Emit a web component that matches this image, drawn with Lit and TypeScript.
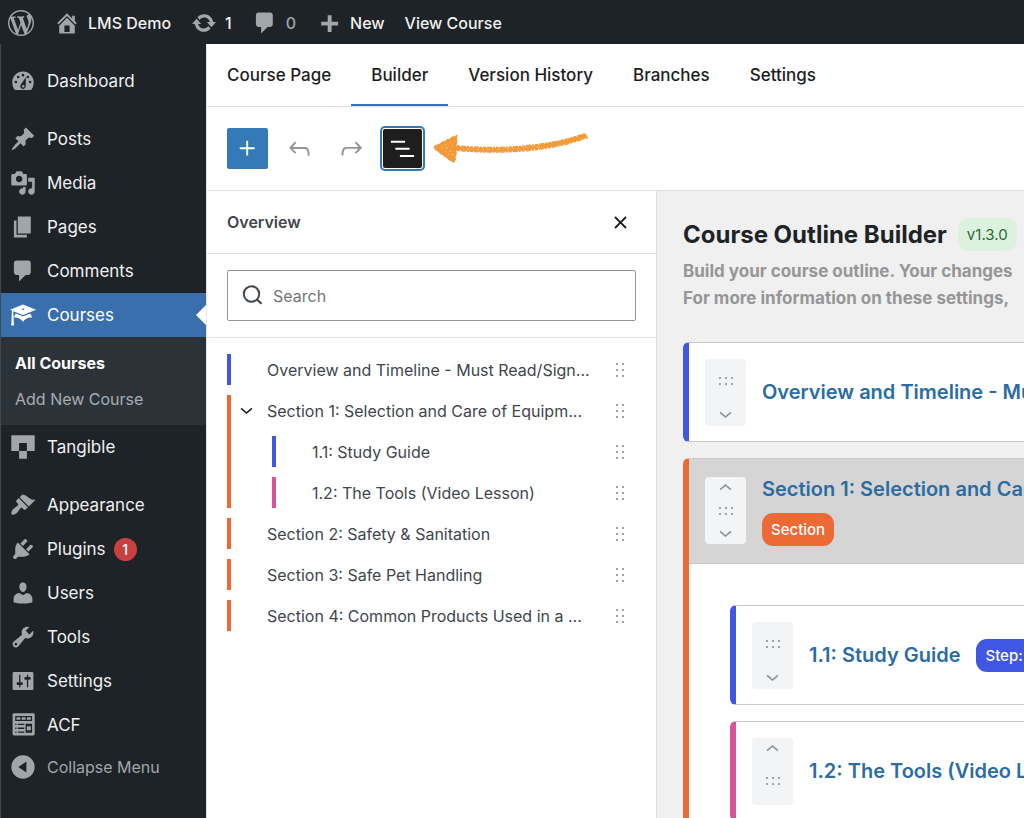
import { LitElement, html, css, svg, nothing } from "lit";
import { customElement, property, state } from "lit/decorators.js";
import { classMap } from "lit/directives/class-map.js";

// Admin glyphs, drawn on a 20-unit grid.
const GLYPHS: Record<string, string> = {
  wordpress:
    "M20 10c0-5.51-4.49-10-10-10C4.48 0 0 4.49 0 10c0 5.52 4.48 10 10 10 5.51 0 10-4.48 10-10zM7.78 15.37L4.37 6.22c.55-.02 1.17-.08 1.17-.08.5-.06.44-1.13-.06-1.11 0 0-1.45.11-2.37.11-.18 0-.37 0-.58-.01C4.12 2.69 6.87 1.11 10 1.11c2.33 0 4.45.87 6.05 2.34-.68-.11-1.65.39-1.65 1.58 0 .74.45 1.36.9 2.1.35.61.55 1.36.55 2.46 0 1.49-1.4 5-1.4 5l-3.03-8.37c.54-.02.82-.17.82-.17.5-.05.44-1.25-.06-1.22 0 0-1.44.12-2.38.12-.87 0-2.33-.12-2.33-.12-.5-.03-.56 1.2-.06 1.22l.92.08 1.26 3.41zM17.41 10c.24-.64.74-1.87.43-4.25.7 1.29 1.05 2.71 1.05 4.25 0 3.29-1.73 6.24-4.4 7.78.97-2.59 1.94-5.2 2.92-7.78zM6.1 18.09C3.12 16.65 1.11 13.53 1.11 10c0-1.3.23-2.48.72-3.59C3.25 10.3 4.67 14.2 6.1 18.09zm4.03-6.63l2.58 6.98c-.86.29-1.76.45-2.71.45-.79 0-1.57-.11-2.29-.33.81-2.38 1.62-4.74 2.42-7.1z",
  home: "M16 8.5l1.53 1.53-1.06 1.06L10 4.6l-6.47 6.49-1.06-1.06L10 2.5l4 4v-2h2v4zm-6-2.46l6 5.99V18H4v-5.97zM12 17v-5H8v5h4z",
  update:
    "M10.2 3.28c3.53 0 6.43 2.61 6.92 6h2.08l-3.5 4-3.5-4h2.32c-.45-1.97-2.21-3.45-4.32-3.45-1.45 0-2.73.71-3.54 1.78L4.95 5.66C6.23 4.2 8.11 3.28 10.2 3.28zm-.4 13.44c-3.52 0-6.43-2.61-6.92-6H.8l3.5-4c1.17 1.33 2.33 2.67 3.5 4H5.48c.45 1.97 2.21 3.45 4.32 3.45 1.45 0 2.73-.71 3.54-1.78l1.71 1.95c-1.28 1.46-3.15 2.38-5.25 2.38z",
  comment: "M5 2h9c1.1 0 2 .9 2 2v7c0 1.1-.9 2-2 2h-2l-5 5v-5H5c-1.1 0-2-.9-2-2V4c0-1.1.9-2 2-2z",
  plus: "M17 9v3h-5v5H9v-5H4V9h5V4h3v5h5z",
  dashboard:
    "M3.76 17h12.48c1.34-1.63 2.01-3.82 2.01-6 0-4.55-3.69-8.25-8.25-8.25S1.75 6.45 1.75 11c0 2.18.67 4.37 2.01 6zM11 5.5a1 1 0 1 1-2 0 1 1 0 0 1 2 0zM7.3 6.9a1 1 0 1 1-2 0 1 1 0 0 1 2 0zM14.7 6.9a1 1 0 1 1-2 0 1 1 0 0 1 2 0zM5.5 10.8a1 1 0 1 1-2 0 1 1 0 0 1 2 0zM16.5 10.8a1 1 0 1 1-2 0 1 1 0 0 1 2 0zM12.2 7.2l-.1 6.6a2.1 2.1 0 1 1-3.6-1.3zM10.2 13a1 1 0 1 0 0 2 1 1 0 0 0 0-2z",
  posts:
    "M10.44 3.02l1.82-1.82 6.36 6.35-1.83 1.82c-1.05-.68-2.48-.57-3.41.36l-.75.75c-.92.93-1.04 2.35-.35 3.41l-1.83 1.82-2.41-2.41-2.8 2.79c-.42.42-3.38 2.71-3.8 2.29s1.86-3.39 2.28-3.81l2.79-2.79L4.1 9.36l1.83-1.82c1.05.69 2.48.57 3.4-.36l.75-.75c.93-.92 1.05-2.35.36-3.41z",
  media:
    "M13 11V4c0-.55-.45-1-1-1h-1.67L9 1H5L3.67 3H2c-.55 0-1 .45-1 1v7c0 .55.45 1 1 1h10c.55 0 1-.45 1-1zM7 4.5c1.38 0 2.5 1.12 2.5 2.5S8.38 9.5 7 9.5 4.5 8.38 4.5 7 5.62 4.5 7 4.5zM14 6h5v10.5c0 1.38-1.12 2.5-2.5 2.5S14 17.88 14 16.5s1.12-2.5 2.5-2.5c.17 0 .34.02.5.05V9h-3V6zm-4 8.05V13h2v3.5c0 1.38-1.12 2.5-2.5 2.5S7 17.88 7 16.5 8.12 14 9.5 14c.17 0 .34.02.5.05z",
  pages: "M6 15V2h10v13H6zm-1 1h8v2H3V5h2v11z",
  courses:
    "M10 10L2.54 7.02 3 18H1l.48-11.41L0 6l10-4 10 4zm0-5c-.55 0-1 .22-1 .5s.45.5 1 .5 1-.22 1-.5-.45-.5-1-.5zm0 6l5.57-2.23c.71.94 1.2 2.07 1.36 3.3-.3-.04-.61-.07-.93-.07-2.55 0-4.78 1.37-6 3.41C8.78 13.37 6.55 12 4 12c-.32 0-.63.03-.93.07.16-1.23.65-2.36 1.36-3.3z",
  tangible: "M1 1h18v12h-6v6H7v-6H1zM7 7v6h6V7z",
  appearance:
    "M14.48 11.06L7.41 3.99l1.5-1.5c.5-.56 2.3-.47 3.51.32 1.21.8 1.43 1.28 2.91 2.1 1.18.64 2.45 1.26 4.45.85zm-.71.71L6.7 4.7 4.93 6.47c-.39.39-.39 1.02 0 1.41l1.06 1.06c.39.39.39 1.03 0 1.42-.6.6-1.43 1.11-2.21 1.69-.35.26-.7.53-1.01.84C1.43 14.23.4 16.08 1.4 17.07c.99 1 2.84-.03 4.18-1.36.31-.31.58-.66.85-1.02.57-.78 1.08-1.61 1.69-2.21.39-.39 1.02-.39 1.41 0l1.06 1.06c.39.39 1.02.39 1.41 0z",
  plugins:
    "M13.11 4.36L9.87 7.6 8 5.73l3.24-3.24c.35-.34 1.05-.2 1.56.32.52.51.66 1.21.31 1.55zm-8 1.77l.91-1.12 9.01 9.01-1.19.84c-.71.71-2.63 1.16-3.82 1.16H6.14L4.9 17.26c-.59.59-1.54.59-2.12 0-.59-.58-.59-1.53 0-2.12l1.24-1.24v-3.88c0-1.13.4-3.19 1.09-3.89zm7.26 3.97l3.24-3.24c.34-.35 1.04-.21 1.55.31.52.51.66 1.21.31 1.55l-3.24 3.25z",
  users:
    "M10 9.25c-2.27 0-2.73-3.44-2.73-3.44C7 4.02 7.82 2 9.97 2c2.16 0 2.98 2.02 2.71 3.81 0 0-.41 3.44-2.68 3.44zm0 2.57L12.72 10c2.39 0 4.52 2.33 4.52 4.53v2.49s-3.65 1.13-7.24 1.13c-3.65 0-7.24-1.13-7.24-1.13v-2.49c0-2.25 1.94-4.48 4.47-4.48z",
  tools:
    "M16.68 9.77c-1.34 1.34-3.3 1.67-4.95.99l-5.41 6.52c-.99.99-2.59.99-3.58 0s-.99-2.59 0-3.57l6.52-5.42c-.68-1.65-.35-3.61.99-4.95 1.28-1.28 3.12-1.62 4.72-1.06l-2.89 2.89 2.82 2.82 2.86-2.87c.53 1.58.18 3.39-1.08 4.65zM3.81 16.21c.4.39 1.04.39 1.43 0 .4-.4.4-1.04 0-1.43-.39-.4-1.03-.4-1.43 0-.39.39-.39 1.03 0 1.43z",
  settings:
    "M18 16V4c0-.55-.45-1-1-1H3c-.55 0-1 .45-1 1v12c0 .55.45 1 1 1h14c.55 0 1-.45 1-1zM8 11h1c.55 0 1 .45 1 1s-.45 1-1 1H8v1.5c0 .28-.22.5-.5.5s-.5-.22-.5-.5V13H6c-.55 0-1-.45-1-1s.45-1 1-1h1V5.5c0-.28.22-.5.5-.5s.5.22.5.5V11zm5-2h-1c-.55 0-1-.45-1-1s.45-1 1-1h1V5.5c0-.28.22-.5.5-.5s.5.22.5.5V7h1c.55 0 1 .45 1 1s-.45 1-1 1h-1v5.5c0 .28-.22.5-.5.5s-.5-.22-.5-.5V9z",
  acf: "M19 17V2c0-.55-.45-1-1-1H3c-.55 0-1 .45-1 1v15c0 .55.45 1 1 1h15c.55 0 1-.45 1-1zM4 3h13v4H4zm1 1v2h3V4zm4 0v2h3V4zm4 0v2h3V4zM4 9h1v1H4zm2 0h5v1H6zm-2 3h1v1H4zm2 0h5v1H6zm-2 3h1v1H4zm2 0h5v1H6zm6-6h5v7h-5zm1 2v3h3v-3z",
  collapse: "M10 1a9 9 0 1 1 0 18 9 9 0 0 1 0-18zm2.6 4.8L6.4 10l6.2 4.2z",
};

const glyph = (name: string) => html`
  <svg class="glyph" viewBox="0 0 20 20" aria-hidden="true">
    <path fill="currentColor" fill-rule="evenodd" d=${GLYPHS[name]}></path>
  </svg>
`;

// Editor icons, drawn on a 24-unit grid.
const EDITOR: Record<string, string> = {
  add: "M11 12.5V17.5H12.5V12.5H17.5V11H12.5V6H11V11H6V12.5H11Z",
  undo: "M18.3 11.7c-.6-.6-1.4-.9-2.3-.9H6.7l2.9-3.3-1.1-1-4.5 5L8.5 16l1-1-2.7-2.7H16c.5 0 .9.2 1.3.5 1 1 1 3.4 1 4.5v.3h1.5v-.2c0-1.5 0-4.3-1.5-5.7z",
  redo: "M15.6 6.5l-1.1 1 2.9 3.3H8c-.9 0-1.7.3-2.3.9-1.4 1.5-1.4 4.2-1.4 5.6v.2h1.5v-.3c0-1.1 0-3.5 1-4.5.3-.3.7-.5 1.3-.5h9.2L14.5 15l1.1 1.1 4.6-4.6-4.6-5z",
  list: "M3 6h11v1.5H3V6Zm3.5 5.5h11V13h-11v-1.5ZM21 17H10v1.5h11V17Z",
  close:
    "M12 13.06l3.712 3.713 1.061-1.06L13.061 12l3.712-3.712-1.06-1.06L12 10.938 8.288 7.227l-1.061 1.06L10.939 12l-3.712 3.712 1.06 1.061L12 13.061z",
};

const editorIcon = (name: string) => html`
  <svg class="editor-icon" viewBox="0 0 24 24" aria-hidden="true">
    <path fill="currentColor" d=${EDITOR[name]}></path>
  </svg>
`;

const chevron = (up = false) => html`
  <svg class="chevron" viewBox="0 0 14 8" aria-hidden="true">
    <path fill="none" stroke="currentColor" stroke-width="1.7" d=${up ? "M1.2 6.8L7 1.8l5.8 5" : "M1.2 1.2L7 6.2l5.8-5"}></path>
  </svg>
`;

const dots = (columns: number, rows: number) => {
  const w = (columns - 1) * 6 + 2;
  const h = (rows - 1) * 6 + 2;
  const marks = [];
  for (let r = 0; r < rows; r++)
    for (let c = 0; c < columns; c++)
      marks.push(svg`<circle cx=${c * 6 + 1} cy=${r * 6 + 1} r="1.1"></circle>`);
  return html`<svg class="dots" width=${w} height=${h} viewBox="0 0 ${w} ${h}" fill="currentColor" overflow="visible" aria-hidden="true">${marks}</svg>`;
};

const shared = css`
  :host {
    display: block;
    box-sizing: border-box;
  }
  *,
  *::before,
  *::after {
    box-sizing: border-box;
  }
  ul,
  h1,
  h2,
  p {
    margin: 0;
    padding: 0;
  }
  ul {
    list-style: none;
  }
  a {
    color: inherit;
    text-decoration: none;
  }
  button {
    margin: 0;
    padding: 0;
    border: 0;
    background: none;
    color: inherit;
    font: inherit;
    cursor: pointer;
  }
  .glyph {
    display: block;
    flex: none;
    width: 26px;
    height: 26px;
    color: #a2a6aa;
  }
  .editor-icon {
    display: block;
    width: 31px;
    height: 31px;
  }
  .chevron {
    display: block;
    width: 13px;
    height: 8px;
  }
  .dots {
    display: block;
  }
`;

@customElement("admin-bar")
export class AdminBar extends LitElement {
  static styles = [
    shared,
    css`
      :host {
        height: 44px;
        background: #1d2327;
        color: #f0f0f1;
        font-size: 16px;
        font-weight: 500;
      }
      .bar {
        display: flex;
        align-items: center;
        gap: 20px;
        height: 100%;
        padding: 1px 8px 0;
        white-space: nowrap;
      }
      .item {
        display: flex;
        align-items: center;
        gap: 8px;
      }
      .muted {
        color: #a2a6aa;
      }
    `,
  ];

  render() {
    return html`
      <nav class="bar" aria-label="Toolbar">
        <a class="item" href="#about" aria-label="About WordPress">${glyph("wordpress")}</a>
        <a class="item" href="#site">${glyph("home")}<span>LMS Demo</span></a>
        <a class="item" href="#updates">${glyph("update")}<span>1</span></a>
        <a class="item" href="#comments">${glyph("comment")}<span class="muted">0</span></a>
        <a class="item" href="#new">${glyph("plus")}<span>New</span></a>
        <a class="item" href="#view"><span>View Course</span></a>
      </nav>
    `;
  }
}

interface MenuItem {
  icon: string;
  label: string;
  count?: number;
  current?: boolean;
  children?: string[];
}

const MENU: MenuItem[][] = [
  [{ icon: "dashboard", label: "Dashboard" }],
  [
    { icon: "posts", label: "Posts" },
    { icon: "media", label: "Media" },
    { icon: "pages", label: "Pages" },
    { icon: "comment", label: "Comments" },
    { icon: "courses", label: "Courses", current: true, children: ["All Courses", "Add New Course"] },
    { icon: "tangible", label: "Tangible" },
  ],
  [
    { icon: "appearance", label: "Appearance" },
    { icon: "plugins", label: "Plugins", count: 1 },
    { icon: "users", label: "Users" },
    { icon: "tools", label: "Tools" },
    { icon: "settings", label: "Settings" },
    { icon: "acf", label: "ACF" },
  ],
];

@customElement("admin-menu")
export class AdminMenu extends LitElement {
  static styles = [
    shared,
    css`
      :host {
        padding: 15px 0;
        border-left: 1px solid #43484c;
        background: #1d2327;
        color: #f0f0f1;
        font-size: 17px;
      }
      .menu {
        display: flex;
        flex-direction: column;
        gap: 14px;
      }
      .row {
        display: flex;
        align-items: center;
        gap: 11px;
        width: 100%;
        height: 44px;
        padding-left: 9px;
        white-space: nowrap;
      }
      .row.current {
        position: relative;
        background: #3a6fae;
        color: #fff;
      }
      .row.current .glyph {
        color: #fff;
      }
      .row.current::after {
        content: "";
        position: absolute;
        right: 0;
        top: 12px;
        border: 10px solid transparent;
        border-left-width: 0;
        border-right-color: #fff;
      }
      .count {
        display: grid;
        place-items: center;
        width: 23px;
        height: 23px;
        margin-left: -3px;
        border-radius: 50%;
        background: #c9403f;
        color: #fff;
        font-size: 14px;
        font-weight: 500;
      }
      .sub {
        display: flex;
        flex-direction: column;
        padding: 8px 14px;
        background: #2c3338;
        color: #a9adb1;
        font-size: 16px;
        line-height: 36px;
      }
      .sub .on {
        color: #fff;
        font-weight: 700;
      }
      .row.collapse {
        height: 40px;
        color: #a2a6aa;
        font-size: 16px;
        text-align: left;
      }
    `,
  ];

  private renderItem(item: MenuItem) {
    return html`
      <li>
        <a class=${classMap({ row: true, current: !!item.current })} href="#${item.icon}">
          ${glyph(item.icon)}<span>${item.label}</span>
          ${item.count ? html`<span class="count">${item.count}</span>` : nothing}
        </a>
        ${item.children
          ? html`<ul class="sub">
              ${item.children.map((label, i) => html`<li><a class=${classMap({ on: i === 0 })} href="#courses">${label}</a></li>`)}
            </ul>`
          : nothing}
      </li>
    `;
  }

  render() {
    return html`
      <nav aria-label="Main menu">
        <div class="menu">
          ${MENU.map((group) => html`<ul>${group.map((item) => this.renderItem(item))}</ul>`)}
        </div>
        <button class="row collapse" type="button">${glyph("collapse")}<span>Collapse Menu</span></button>
      </nav>
    `;
  }
}

type Kind = "step" | "section" | "video";

@customElement("overview-panel")
export class OverviewPanel extends LitElement {
  @state() private query = "";

  static styles = [
    shared,
    css`
      :host {
        border-right: 1px solid #dddddd;
        background: #fff;
        color: #40464d;
        font-size: 16px;
      }
      .head {
        display: flex;
        align-items: center;
        justify-content: space-between;
        height: 63px;
        padding: 0 20px;
        border-bottom: 1px solid #dddddd;
      }
      .title {
        font-size: 16px;
        font-weight: 600;
      }
      .close {
        color: #1e1e1e;
      }
      .find {
        padding: 16px 20px;
        border-bottom: 1px solid #dddddd;
      }
      .field {
        display: flex;
        align-items: center;
        gap: 10px;
        height: 51px;
        padding: 0 14px;
        border: 1px solid #949494;
        border-radius: 2px;
      }
      .lens {
        flex: none;
        width: 21px;
        height: 21px;
      }
      .field input {
        flex: 1;
        min-width: 0;
        padding: 0;
        border: 0;
        outline: 0;
        background: none;
        color: inherit;
        font: inherit;
      }
      .field input::placeholder {
        color: #757575;
        opacity: 1;
      }
      .tree {
        display: flex;
        flex-direction: column;
        gap: 10px;
        padding: 16px 20px;
      }
      .node {
        display: grid;
        grid-template-columns: 4px 1fr;
      }
      .mark.step {
        background: #4057e3;
      }
      .mark.section {
        background: #ed6a37;
      }
      .mark.video {
        background: #d9529a;
      }
      .body {
        display: flex;
        flex-direction: column;
        gap: 10px;
        min-width: 0;
      }
      .line {
        display: grid;
        grid-template-columns: 36px 1fr 32px;
        align-items: center;
        height: 31px;
      }
      .fold {
        display: grid;
        place-items: center;
        width: 31px;
        height: 31px;
        color: #1e1e1e;
      }
      .label {
        overflow: hidden;
        white-space: nowrap;
      }
      .grab {
        display: grid;
        place-items: center;
        height: 31px;
        color: #8a8a8a;
      }
      .kids {
        display: flex;
        flex-direction: column;
        gap: 10px;
        padding-left: 41px;
      }
    `,
  ];

  private node(kind: Kind, label: string, kids?: unknown): unknown {
    return html`
      <li class="node">
        <span class="mark ${kind}"></span>
        <div class="body">
          <div class="line">
            ${kids
              ? html`<button class="fold" type="button" aria-label="Collapse section">${chevron()}</button>`
              : html`<span></span>`}
            <span class="label">${label}</span>
            <button class="grab" type="button" aria-label="Move">${dots(2, 3)}</button>
          </div>
          ${kids ? html`<ul class="kids">${kids}</ul>` : nothing}
        </div>
      </li>
    `;
  }

  render() {
    return html`
      <div class="head">
        <h2 class="title">Overview</h2>
        <button class="close" type="button" aria-label="Close">${editorIcon("close")}</button>
      </div>
      <div class="find">
        <label class="field">
          <svg class="lens" viewBox="0 0 21 21" aria-label="Search" role="img">
            <circle cx="9.5" cy="9" r="7.7" fill="none" stroke="#40464d" stroke-width="2"></circle>
            <path d="M15 14.5l4.6 4.3" stroke="#40464d" stroke-width="2.2"></path>
          </svg>
          <input
            type="text"
            placeholder="Search"
            .value=${this.query}
            @input=${(e: Event) => (this.query = (e.target as HTMLInputElement).value)}
          />
        </label>
      </div>
      <ul class="tree">
        ${this.node("step", "Overview and Timeline - Must Read/Sign...")}
        ${this.node("section", "Section 1: Selection and Care of Equipm...", [
          this.node("step", "1.1: Study Guide"),
          this.node("video", "1.2: The Tools (Video Lesson)"),
        ])}
        ${this.node("section", "Section 2: Safety & Sanitation")}
        ${this.node("section", "Section 3: Safe Pet Handling")}
        ${this.node("section", "Section 4: Common Products Used in a ...")}
      </ul>
    `;
  }
}

@customElement("outline-card")
export class OutlineCard extends LitElement {
  @property() kind: Kind = "step";
  @property() heading = "";
  @property() tag = "";
  @property({ type: Boolean }) up = false;
  @property({ type: Boolean }) down = false;

  static styles = [
    shared,
    css`
      :host {
        border: 1px solid #c9cacc;
        border-left: 6px solid #4057e3;
        border-radius: 6px 0 0 6px;
        background: #fff;
      }
      :host([kind="section"]) {
        border-left-color: #ed6a37;
      }
      :host([kind="video"]) {
        border-left-color: #d9529a;
      }
      .head {
        display: flex;
        align-items: center;
        gap: 16px;
        min-height: 98px;
        padding: 15px 16px;
      }
      .head.section {
        align-items: flex-start;
        min-height: 105px;
        padding-top: 18px;
        border-bottom: 1px solid #c9cacc;
        background: #d5d5d5;
      }
      .mover {
        display: grid;
        grid-template-rows: 20px 27px 20px;
        justify-items: center;
        align-items: center;
        flex: none;
        width: 41px;
        border-radius: 4px;
        background: #f3f4f6;
        color: #8c8f94;
      }
      .mover.first {
        grid-template-rows: 45px 22px;
      }
      .mover.last {
        grid-template-rows: 20px 47px;
      }
      .mover button {
        display: grid;
        place-items: center;
        width: 41px;
        height: 20px;
      }
      .text {
        display: flex;
        align-items: center;
        gap: 16px;
        white-space: nowrap;
      }
      .section .text {
        flex-direction: column;
        align-items: flex-start;
        gap: 11px;
      }
      .name {
        color: #2b6ca3;
        font-size: 20px;
        font-weight: 600;
        line-height: 25px;
      }
      .tag {
        padding: 0 9px;
        border-radius: 11px;
        background: #4057e3;
        color: #fff;
        font-size: 15px;
        font-weight: 500;
        line-height: 33px;
      }
      .section .tag {
        background: #ed6a37;
      }
      .kids {
        display: flex;
        flex-direction: column;
        gap: 16px;
        padding: 41px;
      }
    `,
  ];

  render() {
    const section = this.kind === "section";
    return html`
      <div class=${classMap({ head: true, section })}>
        <div class=${classMap({ mover: true, first: !this.up, last: !this.down })}>
          ${this.up ? html`<button type="button" aria-label="Move up">${chevron(true)}</button>` : nothing}
          ${dots(3, 2)}
          ${this.down ? html`<button type="button" aria-label="Move down">${chevron()}</button>` : nothing}
        </div>
        <div class="text">
          <a class="name" href="#edit">${this.heading}</a>
          ${this.tag ? html`<span class="tag">${this.tag}</span>` : nothing}
        </div>
      </div>
      ${section ? html`<div class="kids"><slot></slot></div>` : nothing}
    `;
  }
}

const TABS = ["Course Page", "Builder", "Version History", "Branches", "Settings"];

@customElement("app-root")
export class AppRoot extends LitElement {
  @state() private tab = "Builder";

  static styles = [
    shared,
    css`
      :host {
        display: grid;
        grid-template-rows: auto minmax(0, 1fr);
        height: 100vh;
        overflow: hidden;
        background: #fff;
        color: #1e1e1e;
        font-family: Inter, "Liberation Sans", sans-serif;
        font-size: 16px;
      }
      .shell {
        display: grid;
        grid-template-columns: 206px minmax(0, 1fr);
        min-height: 0;
      }
      .main {
        display: flex;
        flex-direction: column;
        min-height: 0;
        border-left: 1px solid #e4e4e4;
      }
      .tabs {
        display: flex;
        flex: none;
        height: 63px;
        border-bottom: 1px solid #dddddd;
      }
      .tab {
        padding: 0 20px;
        font-size: 17px;
        font-weight: 500;
        white-space: nowrap;
      }
      .tab.on {
        box-shadow: inset 0 -2px #357ab8;
      }
      .tools {
        display: flex;
        flex: none;
        align-items: center;
        gap: 11px;
        height: 84px;
        padding: 0 20px;
        border-bottom: 1px solid #dddddd;
      }
      .tool {
        display: grid;
        place-items: center;
        width: 41px;
        height: 41px;
        border-radius: 2px;
        color: #949494;
      }
      .tool.primary {
        background: #357ab8;
        color: #fff;
      }
      .tool.pressed {
        width: 39px;
        height: 39px;
        background: #1e1e1e;
        color: #fff;
        box-shadow: 0 0 0 1px #fff, 0 0 0 3px #357ab8;
      }
      .pointer {
        flex: none;
        width: 156px;
        height: 34px;
      }
      .work {
        display: grid;
        flex: 1;
        grid-template-columns: 450px minmax(0, 1fr);
        min-height: 0;
      }
      .canvas {
        overflow: hidden;
        padding: 27px 0 27px 26px;
        background: #f0f0f0;
      }
      .heading {
        display: flex;
        align-items: center;
        gap: 11px;
        white-space: nowrap;
      }
      .heading h1 {
        color: #1d2327;
        font-size: 24px;
        font-weight: 700;
        line-height: 33px;
      }
      .version {
        padding: 0 9px;
        border-radius: 11px;
        background: #dcf1de;
        color: #2c6a34;
        font-size: 15px;
        line-height: 33px;
      }
      .intro {
        margin-top: 7px;
        color: #969696;
        font-size: 17px;
        font-weight: 700;
        line-height: 27px;
        white-space: nowrap;
      }
      .cards {
        display: flex;
        flex-direction: column;
        gap: 16px;
        min-width: 640px;
        margin-top: 30px;
      }
    `,
  ];

  render() {
    return html`
      <admin-bar></admin-bar>
      <div class="shell">
        <admin-menu></admin-menu>
        <main class="main">
          <nav class="tabs" aria-label="Course">
            ${TABS.map(
              (name) => html`<button
                type="button"
                class=${classMap({ tab: true, on: name === this.tab })}
                @click=${() => (this.tab = name)}
              >
                ${name}
              </button>`
            )}
          </nav>
          <div class="tools">
            <button class="tool primary" type="button" aria-label="Add">${editorIcon("add")}</button>
            <button class="tool" type="button" aria-label="Undo">${editorIcon("undo")}</button>
            <button class="tool" type="button" aria-label="Redo">${editorIcon("redo")}</button>
            <button class="tool pressed" type="button" aria-label="Overview" aria-pressed="true">${editorIcon("list")}</button>
            <svg class="pointer" viewBox="0 0 156 34" fill="none" stroke="#f29a38" aria-hidden="true">
              <path
                fill="#f29a38"
                stroke-width="1"
                d="M1 14.5L4 13l3-1 2-2 3-.5L14 7.500l3-.5 2-2 3-.5 2-1.500-.5 4 .5 3-1 3 .8 3-.8 3 .3 3-1.300 3 .5 2.500-2 3-2.500-2-2-.5-2-2.500-2.500-1-2-2-2.500-1-2-2.500-2.500-1z"
              ></path>
              <path stroke-width="4" d="M22 16Q62 20 100 15.500Q130 12 153.500 3.500"></path>
              <path stroke-width="1.400" stroke-dasharray="3 1 5 1 2 1" d="M24 13.800Q62 17.500 100 13Q128 10 152 1.500M24 18.400Q62 22 101 18Q130 14.500 155 5.500"></path>
              <path stroke="#fff" stroke-opacity="0.550" stroke-width="0.700" stroke-dasharray="1 3 2 4" d="M8 15l12-6M9 17l12-3M12 19l9 0M15 22l6 1M30 17Q70 19 110 14.500"></path>
            </svg>
          </div>
          <div class="work">
            <overview-panel></overview-panel>
            <section class="canvas">
              <div class="heading">
                <h1>Course Outline Builder</h1>
                <span class="version">v1.3.0</span>
              </div>
              <p class="intro">Build your course outline. Your changes<br />For more information on these settings,</p>
              <div class="cards">
                <outline-card kind="step" heading="Overview and Timeline - Must Read/Sign" down></outline-card>
                <outline-card kind="section" heading="Section 1: Selection and Care of Equipment" tag="Section" up down>
                  <outline-card kind="step" heading="1.1: Study Guide" tag="Step: Lesson" down></outline-card>
                  <outline-card kind="video" heading="1.2: The Tools (Video Lesson)" up></outline-card>
                </outline-card>
              </div>
            </section>
          </div>
        </main>
      </div>
    `;
  }
}
